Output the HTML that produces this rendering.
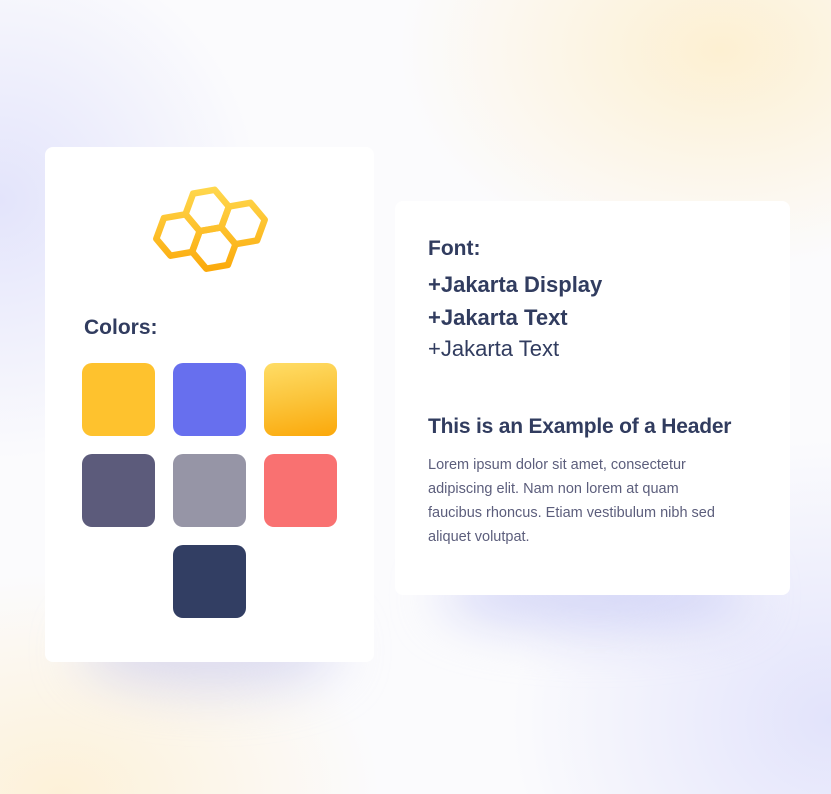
<!DOCTYPE html>
<html><head><style>
html,body{margin:0;padding:0}
body{width:831px;height:794px;overflow:hidden;position:relative;font-family:"Liberation Sans",sans-serif;
background:
radial-gradient(ellipse 320px 220px at 720px 50px,#fdf0d2 0%,rgba(253,241,214,0) 100%),
radial-gradient(ellipse 260px 260px at 0px 200px,#e3e4fb 0%,rgba(230,231,251,0) 100%),
radial-gradient(ellipse 320px 280px at 831px 720px,#e2e3fb 0%,rgba(228,229,251,0) 100%),
radial-gradient(ellipse 320px 220px at 60px 794px,#fdf1d8 0%,rgba(253,243,221,0) 100%),
#fbfbfd;}
.card{position:absolute;background:#fff;border-radius:8px}
.sh{position:absolute;border-radius:50%;filter:blur(25px)}
.sw{position:absolute;width:73px;height:73px;border-radius:10px}
.t{position:absolute;color:#313c5f;white-space:nowrap}
</style></head><body>
<div class="sh" style="left:80px;top:610px;width:260px;height:80px;background:rgba(200,200,235,.6)"></div>
<div class="sh" style="left:440px;top:560px;width:310px;height:70px;background:rgba(200,202,245,.7)"></div>
<div class="card" style="left:45px;top:147px;width:329px;height:515px"></div>
<div class="card" style="left:395px;top:201px;width:395px;height:394px"></div>
<svg style="position:absolute;left:0;top:0" width="831" height="794">
<defs>
<linearGradient id="g" gradientUnits="userSpaceOnUse" x1="0" y1="187" x2="0" y2="272"><stop offset="0" stop-color="#ffd84e"/><stop offset="1" stop-color="#fba90a"/></linearGradient>
</defs>
<g stroke="url(#g)" fill="none" stroke-width="6.5" stroke-linejoin="round">
<polygon points="199.7,231.2 192.1,251.9 170.5,255.7 156.3,238.8 163.9,218.1 185.5,214.3"/>
<polygon points="228.9,206.7 221.3,227.4 199.7,231.2 185.5,214.3 193.1,193.6 214.7,189.8"/>
<polygon points="235.5,244.2 227.9,264.9 206.3,268.7 192.1,251.8 199.7,231.1 221.3,227.3"/>
<polygon points="264.7,219.7 257.1,240.4 235.5,244.2 221.3,227.3 228.9,206.6 250.5,202.8"/>
</g>
</svg>
<div class="t" style="left:84px;top:316px;font-size:21px;font-weight:bold">Colors:</div>
<div class="sw" style="left:82px;top:363px;background:#fec22e"></div>
<div class="sw" style="left:173px;top:363px;background:#676fee"></div>
<div class="sw" style="left:264px;top:363px;background:linear-gradient(170deg,#ffdd66,#fbc43a 50%,#fba80a)"></div>
<div class="sw" style="left:82px;top:454px;background:#5c5b7b"></div>
<div class="sw" style="left:173px;top:454px;background:#9695a6"></div>
<div class="sw" style="left:264px;top:454px;background:#f97171"></div>
<div class="sw" style="left:173px;top:545px;background:#323e63"></div>
<div class="t" style="left:428px;top:237px;font-size:21px;font-weight:bold">Font:</div>
<div class="t" style="left:428px;top:272px;font-size:22px;font-weight:bold">+Jakarta Display</div>
<div class="t" style="left:428px;top:305px;font-size:22px;font-weight:bold">+Jakarta Text</div>
<div class="t" style="left:428px;top:336px;font-size:22px">+Jakarta Text</div>
<div class="t" style="left:428px;top:415px;font-size:21px;font-weight:bold;letter-spacing:-0.2px">This is an Example of a Header</div>
<div class="t" style="left:428px;top:453px;font-size:14.5px;line-height:24px;color:#5c5e7c;white-space:normal;width:300px">Lorem ipsum dolor sit amet, consectetur adipiscing elit. Nam non lorem at quam faucibus rhoncus. Etiam vestibulum nibh sed aliquet volutpat.</div>
</body></html>
